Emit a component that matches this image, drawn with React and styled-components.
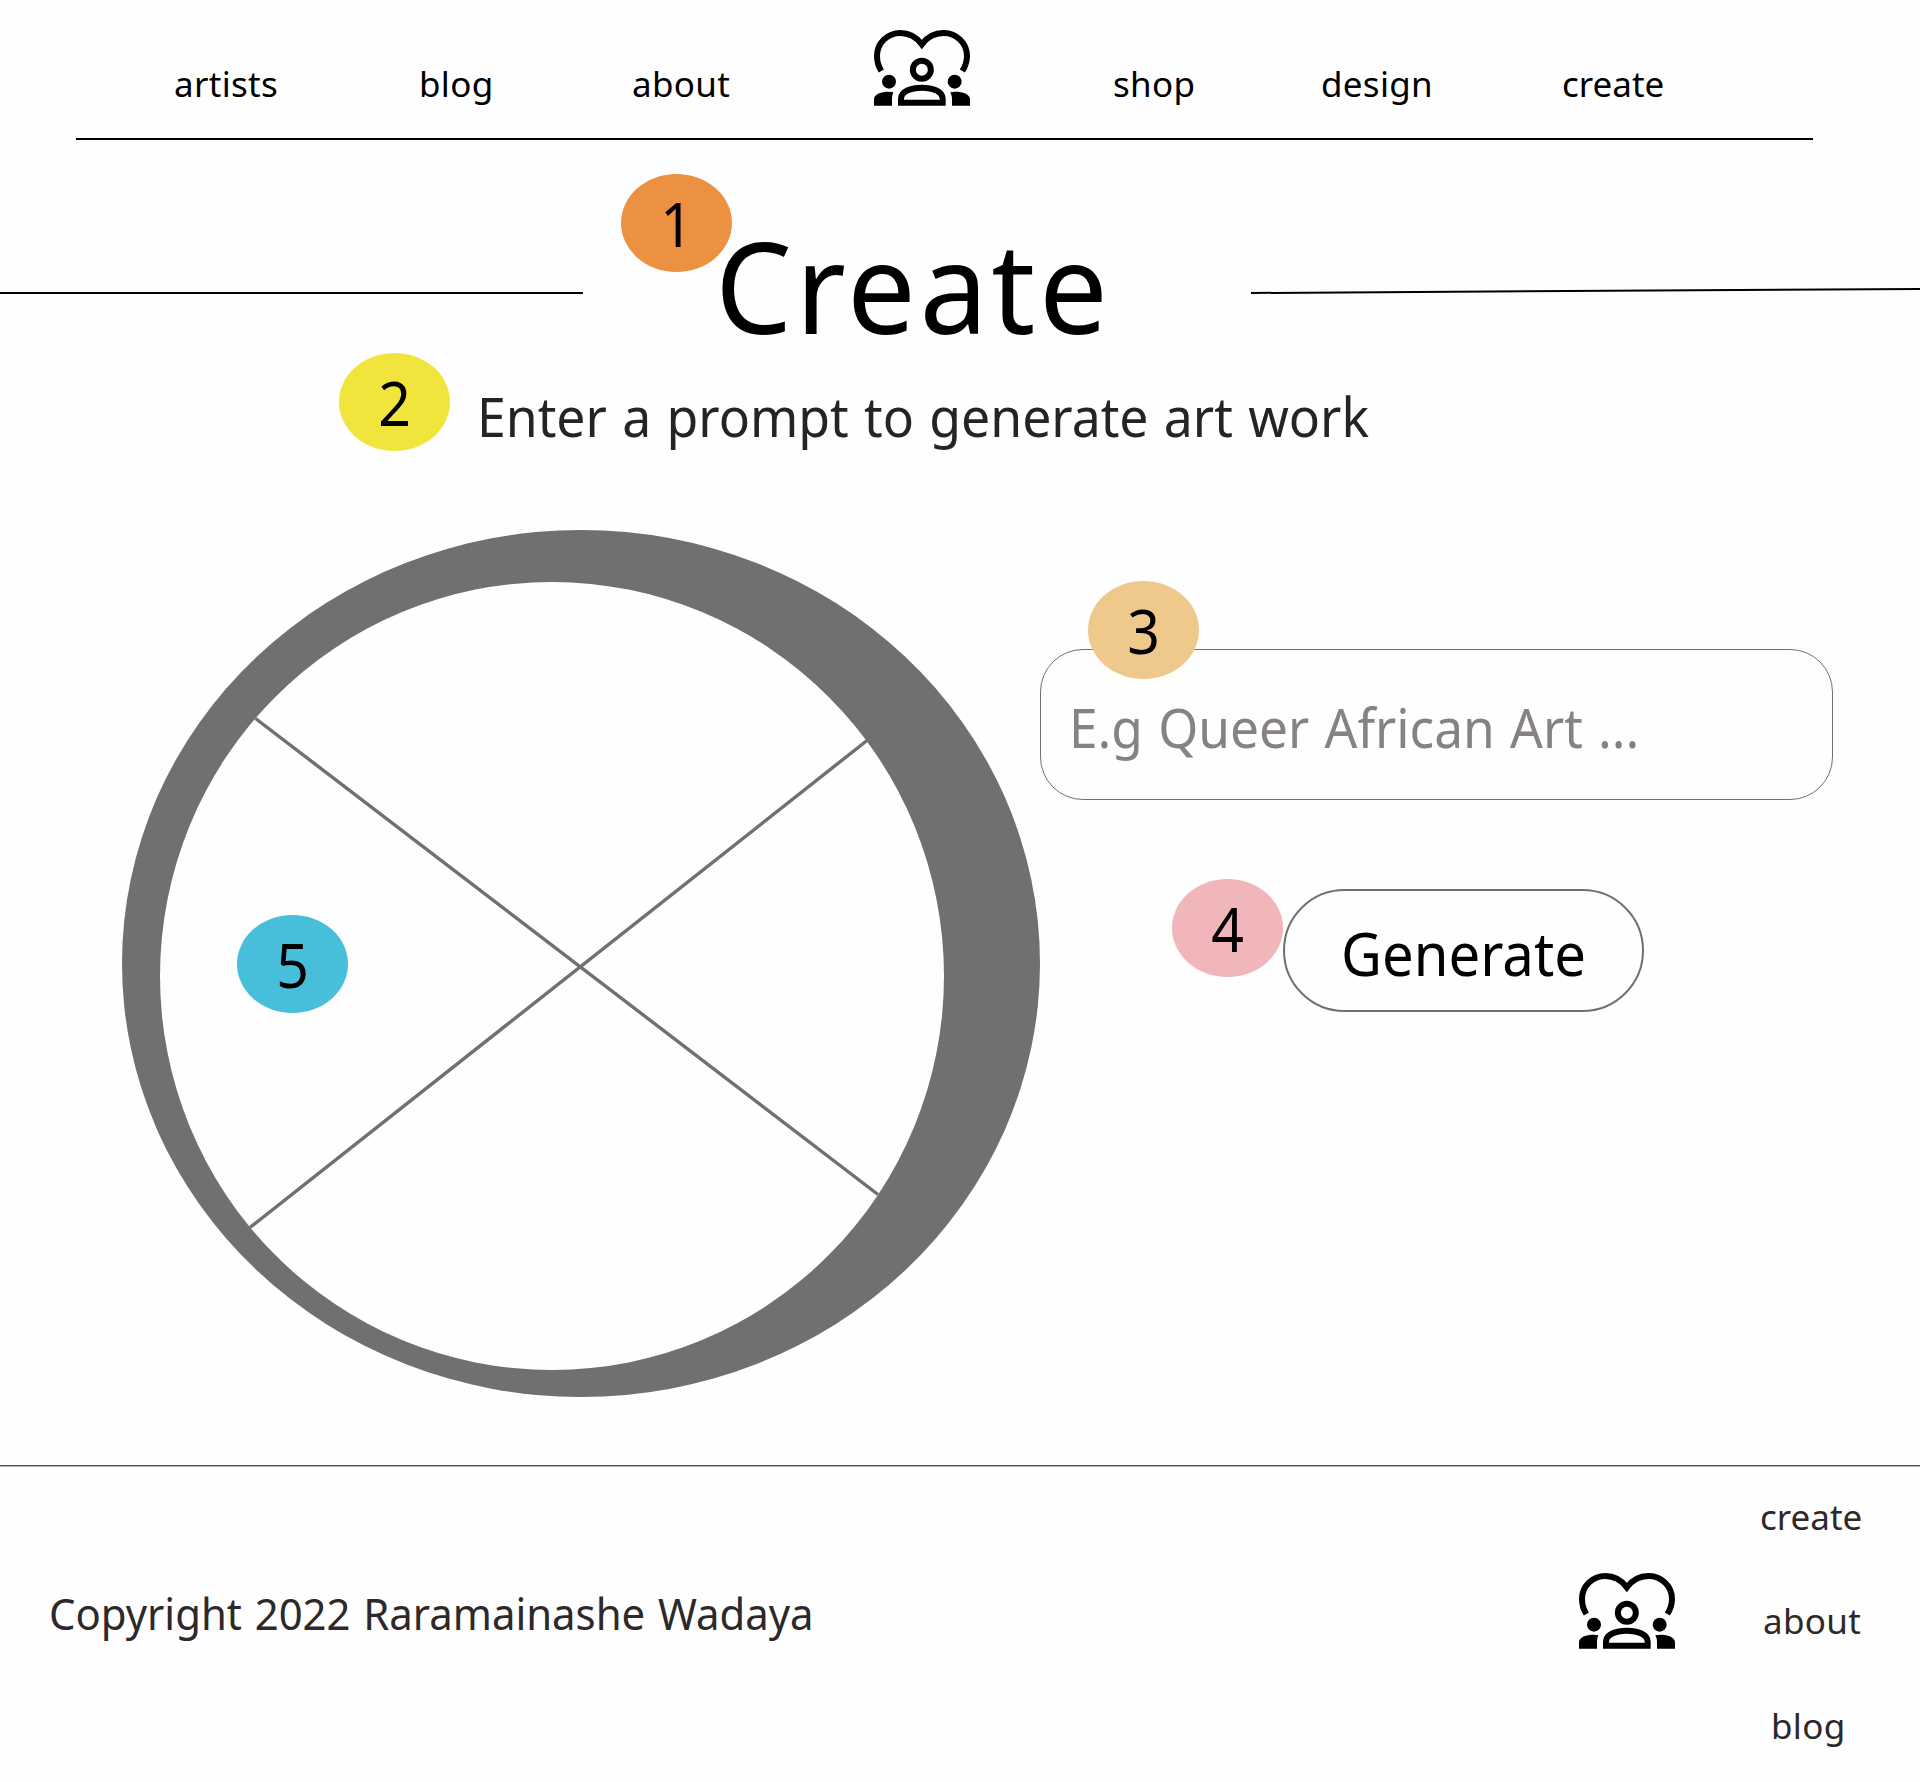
import React from "react";
import styled, { createGlobalStyle } from "styled-components";

const GlobalStyle = createGlobalStyle`
  * { box-sizing: border-box; }
  body { margin: 0; background: #fefefe; }
`;

const Page = styled.div`
  width: 1920px;
  height: 1782px;
  display: flex;
  flex-direction: column;
  overflow: hidden;
  background: #fefefe;
  color: #000;
  font-family: "Noto Sans", "Open Sans", sans-serif;
`;

const Header = styled.header`
  width: 1737px;
  height: 140px;
  margin-left: 76px;
  padding-top: 30px;
  border-bottom: 2px solid #000;
`;

const Nav = styled.nav`
  display: grid;
  grid-template-columns: 98px 245px 213px 242px 239px 208px 241px 1fr;
  align-items: start;
`;

const NavLink = styled.a`
  font-size: 35px;
  line-height: 48px;
  letter-spacing: ${(p) => p.$spacing ?? 0.3}px;
  color: ${(p) => p.$color || "#000"};
  white-space: nowrap;
  margin-top: ${(p) => p.$top ?? 30}px;
  margin-left: ${(p) => p.$left ?? 0}px;
`;

const LogoSvg = styled.svg`
  display: block;
  width: 96px;
  height: 76px;
  flex: none;
`;

const TitleRow = styled.section`
  position: relative;
  height: 140px;
  margin-top: 75px;
  display: flex;
  align-items: center;
`;

const Rule = styled.div`
  width: 583px;
  height: 2px;
  margin-top: 16px;
  background: #000;
`;

const TitleSlot = styled.div`
  width: 668px;
  padding-left: 132px;
`;

const Title = styled.h1`
  margin: 0;
  font-weight: 400;
  font-size: 127px;
  line-height: 140px;
  letter-spacing: 3.7px;
  white-space: nowrap;
  transform: scaleX(0.96);
  transform-origin: left center;
`;

const SlantedRule = styled.svg`
  display: block;
  width: 669px;
  height: 8px;
  margin-top: 12px;
`;

const Prompt = styled.section`
  position: relative;
  height: 175px;
  padding: 21px 0 0 477px;
`;

const Phrase = styled.span`
  display: inline-block;
  transform: scaleX(${(p) => p.$stretch});
  transform-origin: left center;
  font-size: ${(p) => p.$size}px;
  line-height: 80px;
  word-spacing: 2px;
  color: ${(p) => p.$color || "#000"};
  white-space: nowrap;
`;

const BadgeDisc = styled.div`
  position: absolute;
  left: ${(p) => p.$x}px;
  top: ${(p) => p.$y}px;
  width: 111px;
  height: 98px;
  border-radius: 50%;
  background: ${(p) => p.$color};
  font-size: 61.5px;
  line-height: 98px;
  text-align: center;
  z-index: 1;
`;

const Digit = styled.span`
  display: inline-block;
  transform: scaleX(0.93);
`;

const Workspace = styled.main`
  height: 935px;
  display: flex;
  align-items: flex-start;
`;

const Artwork = styled.div`
  position: relative;
  width: 918px;
  height: 867px;
  margin-left: 122px;
`;

const Controls = styled.div`
  width: 793px;
  padding-top: 119px;
  display: flex;
  flex-direction: column;
`;

const Field = styled.div`
  position: relative;
  height: 151px;
  padding: 37px 0 0 28px;
  border: 1px solid #707070;
  border-radius: 43px;
`;

const Generate = styled.div`
  position: relative;
  width: 361px;
  height: 123px;
  margin: 89px 0 0 243px;
  padding: 22px 0 0 56px;
  border: 2px solid #707070;
  border-radius: 62px;
`;

const Footer = styled.footer`
  flex: 1;
  display: flex;
  border-top: 1px solid #505250;
  box-shadow: inset 0 1px 0 #b4b4b4;
`;

const Copyright = styled.div`
  width: 1579px;
  padding: 107px 0 0 49px;
`;

const FooterLogo = styled.div`
  width: 181px;
  padding-top: 107px;
`;

const FooterLinks = styled.div`
  display: flex;
  flex-direction: column;
  padding-top: 27px;
`;

function Logo() {
  return (
    <LogoSvg viewBox="0 0 288 228" fill="#000">
      <path
        d="M22 123C13 109 9 95 9 78A70 69 0 0 1 79 9C104 9 127 21 143.5 43C160 21 183 9 208 9A70 69 0 0 1 279 78C279 95 274 109 265 123"
        fill="none"
        stroke="#000"
        strokeWidth="18"
      />
      <circle cx="143.5" cy="119.5" r="27" fill="none" stroke="#000" strokeWidth="18" />
      <circle cx="45" cy="155" r="21" />
      <circle cx="242" cy="155" r="21" />
      <path d="M0 227V208C0 192 22 185 44 185Q52 185 58 187Q54 196 54 208V227Z" />
      <path d="M288 227V208C288 192 266 185 244 185Q236 185 229 187Q234 196 234 208V227Z" />
      <path
        d="M81 218V206C81 185 110 173 143.5 173S206 185 206 206V218Z"
        fill="none"
        stroke="#000"
        strokeWidth="18"
      />
    </LogoSvg>
  );
}

function Badge({ x, y, color, children }) {
  return (
    <BadgeDisc $x={x} $y={y} $color={color}>
      <Digit>{children}</Digit>
    </BadgeDisc>
  );
}

export default function App() {
  return (
    <Page>
      <GlobalStyle />
      <Header>
        <Nav>
          <span />
          <NavLink>artists</NavLink>
          <NavLink>blog</NavLink>
          <NavLink>about</NavLink>
          <Logo />
          <NavLink>shop</NavLink>
          <NavLink>design</NavLink>
          <NavLink $spacing={0}>create</NavLink>
        </Nav>
      </Header>

      <TitleRow>
        <Badge x={621} y={-41} color="#ec9142">1</Badge>
        <Rule />
        <TitleSlot>
          <Title>Create</Title>
        </TitleSlot>
        <SlantedRule viewBox="0 0 669 8">
          <line x1="0" y1="6" x2="669" y2="2" stroke="#000" strokeWidth="2" />
        </SlantedRule>
      </TitleRow>

      <Prompt>
        <Badge x={339} y={-2} color="#f1e43d">2</Badge>
        <Phrase $size={55} $stretch={0.94} $color="#242424">
          Enter a prompt to generate art work
        </Phrase>
      </Prompt>

      <Workspace>
        <Artwork>
          <svg width="918" height="867" viewBox="0 0 918 867" display="block">
            <ellipse cx="459" cy="433.5" rx="459" ry="433.5" fill="#707070" />
            <ellipse cx="430" cy="446" rx="392" ry="394" fill="#fefefe" />
            <path d="M133.5 188.5L756 664.5M745 210.5L128 697.5" stroke="#707070" strokeWidth="3.4" />
          </svg>
          <Badge x={115} y={385} color="#47bfda">5</Badge>
        </Artwork>
        <Controls>
          <Field>
            <Badge x={47} y={-69} color="#efc98c">3</Badge>
            <Phrase $size={54.5} $stretch={0.943} $color="#868281">
              E.g Queer African Art ...
            </Phrase>
          </Field>
          <Generate>
            <Badge x={-113} y={-12} color="#f1b6b9">4</Badge>
            <Phrase $size={60.5} $stretch={0.93}>Generate</Phrase>
          </Generate>
        </Controls>
      </Workspace>

      <Footer>
        <Copyright>
          <Phrase $size={44.5} $stretch={0.941} $color="#2d2829">
            Copyright 2022 Raramainashe Wadaya
          </Phrase>
        </Copyright>
        <FooterLogo>
          <Logo />
        </FooterLogo>
        <FooterLinks>
          <NavLink $top={0} $spacing={0} $color="#2d2829">create</NavLink>
          <NavLink $top={56} $left={3} $color="#2d2829">about</NavLink>
          <NavLink $top={57} $left={11} $color="#2d2829">blog</NavLink>
        </FooterLinks>
      </Footer>
    </Page>
  );
}
